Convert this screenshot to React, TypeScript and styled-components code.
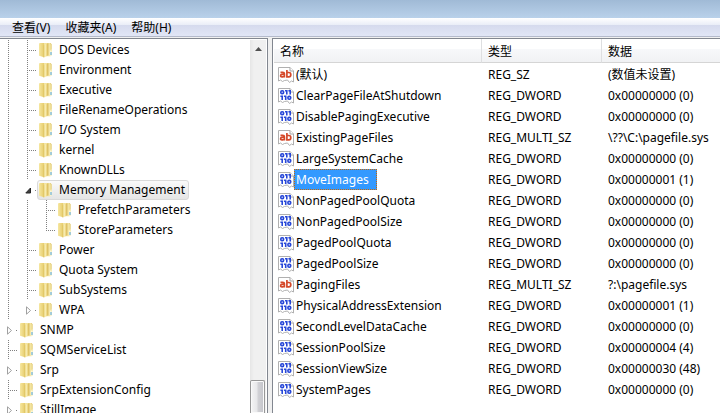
import React from "react";
import styled, { createGlobalStyle, css } from "styled-components";

const GlobalStyle = createGlobalStyle`
  * { box-sizing: border-box; }
  body { margin: 0; overflow: hidden; }
  body, button, table {
    font-family: "Noto Sans", "Noto Sans CJK SC", sans-serif;
    font-size: 12px;
    line-height: 20px;
    color: #000;
  }
`;

const Window = styled.div`
  display: flex;
  flex-direction: column;
  height: 100vh;
  background: #f0f0f0;
`;

const TitleBar = styled.header`
  flex: none;
  height: 18px;
  background: linear-gradient(#a0bad6, #b9d1ea);
`;

const MenuBar = styled.nav`
  flex: none;
  display: flex;
  gap: 15px;
  height: 20px;
  padding: 0 12px;
  background: linear-gradient(#fff 0, #e9edf7 7px, #d5daed 7px, #e1e6f6 18px, #b4bacb 18px, #b4bacb 19px, #f0f0f0 19px);
`;

const MenuButton = styled.button`
  padding: 0;
  border: 0;
  background: none;
  height: 20px;
  white-space: nowrap;
`;

const Panes = styled.main`
  flex: 1;
  min-height: 0;
  display: flex;
  gap: 4px;
`;

const TreePane = styled.section`
  flex: 0 0 268px;
  display: flex;
  min-height: 0;
  padding: 1px 1px 0 0;
  border-top: 1px solid #828790;
  border-right: 1px solid #828790;
  background: #fff;
`;

const Tree = styled.ul`
  flex: 1;
  min-width: 0;
  margin: 0;
  padding: 0;
  list-style: none;
  overflow: hidden;
`;

const TreeRow = styled.li`
  display: flex;
  height: 20px;
`;

const dotsDown = "repeating-linear-gradient(#808080 0, #808080 1px, transparent 1px, transparent 2px)";
const dotsAcross = "repeating-linear-gradient(90deg, #808080 0, #808080 1px, transparent 1px, transparent 2px)";

const Guide = styled.span`
  flex: 0 0 19px;
  background: ${dotsDown} 8px 0 / 1px 100% no-repeat;
`;

type BranchKind = "tee" | "end" | "toggle";

const Branch = styled.span<{ $kind: BranchKind }>`
  flex: 0 0 18px;
  display: flex;
  align-items: center;
  padding-left: 6px;
  ${(p) =>
    p.$kind === "toggle"
      ? css`background: ${dotsAcross} 16px 10px / 2px 1px no-repeat;`
      : css`background:
          ${dotsAcross} 10px 10px / 8px 1px no-repeat,
          ${dotsDown} 8px 0 / 1px ${p.$kind === "tee" ? "100%" : "11px"} no-repeat;`}
`;

const Toggle = styled.button`
  display: flex;
  padding: 0;
  border: 0;
  background: none;
`;

const TreeItem = styled.button<{ $selected: boolean }>`
  display: flex;
  align-items: center;
  gap: 6px;
  height: 20px;
  padding: 0 3px 0 1px;
  border: 1px solid ${(p) => (p.$selected ? "#d9d9d9" : "transparent")};
  border-radius: 3px;
  background: ${(p) => (p.$selected ? "linear-gradient(#fafafa, #e5e5e5)" : "none")};
  line-height: 18px;
  white-space: nowrap;
`;

const ScrollBar = styled.div`
  flex: 0 0 16px;
  display: flex;
  flex-direction: column;
  justify-content: space-between;
  align-items: stretch;
  background: linear-gradient(90deg, #e6e6e6, #f0f0f0 4px, #f0f0f0);
`;

const ScrollArrow = styled.button`
  display: flex;
  justify-content: center;
  align-items: center;
  height: 17px;
  padding: 0;
  border: 0;
  background: none;
`;

const ScrollThumb = styled.div`
  height: 33px;
  margin-right: 1px;
  border: 1px solid #979797;
  border-bottom: 0;
  border-radius: 2px 2px 0 0;
  background: linear-gradient(90deg, #f5f5f5, #e8e8ea 45%, #d2d2d6 55%, #c2c3c9);
  box-shadow: inset 0 0 0 1px #fafafa;
`;

const ListPane = styled.section`
  flex: 1;
  min-width: 0;
  overflow: hidden;
  padding: 0 0 0 1px;
  border-top: 1px solid #828790;
  border-left: 1px solid #828790;
  background: #fff;
`;

const ValueTable = styled.table`
  width: 100%;
  table-layout: fixed;
  border-collapse: separate;
  border-spacing: 0;
`;

const HeadCell = styled.th<{ $width?: number }>`
  width: ${(p) => (p.$width ? `${p.$width}px` : "auto")};
  height: 24px;
  padding: 2px 0 0 6px;
  border-right: ${(p) => (p.$width ? "1px solid #dedfe1" : "0")};
  border-bottom: 1px solid #d5d5d5;
  background: linear-gradient(#fff 0, #fff 10px, #f7f8fa 10px, #f1f2f4 100%);
  font-weight: 400;
  text-align: left;
`;

const ValueCell = styled.td`
  height: 21px;
  padding: 0 0 0 6px;
  line-height: 21px;
  white-space: nowrap;
  overflow: hidden;
`;

const NameCell = styled(ValueCell)`
  padding-left: 4px;
`;

const TableBody = styled.tbody`
  &::before {
    content: "";
    display: table-row;
    height: 1px;
  }
`;

const NameLine = styled.div`
  display: flex;
  align-items: center;
  height: 21px;
`;

const ValueName = styled.button<{ $selected: boolean }>`
  height: 21px;
  padding: 0 7px 0 1px;
  border: 1px dotted ${(p) => (p.$selected ? "#cc6600" : "transparent")};
  background: ${(p) => (p.$selected ? "#3399ff" : "none")};
  color: ${(p) => (p.$selected ? "#fff" : "#000")};
  line-height: 19px;
`;

const FolderIcon = () => (
  <svg width="14" height="16" viewBox="0 0 14 16" aria-hidden="true">
    <defs>
      <linearGradient id="side" x1="0" x2="1">
        <stop offset="0" stopColor="#f6e7a0" />
        <stop offset="1" stopColor="#e6cc6c" />
      </linearGradient>
      <linearGradient id="cover" x1="0" x2="1">
        <stop offset="0" stopColor="#dcbf58" />
        <stop offset="0.35" stopColor="#fbf2bd" />
        <stop offset="1" stopColor="#e2c45c" />
      </linearGradient>
    </defs>
    <path d="M4 1h7.500l1 1v5.500l.5.800V13l-1.500 1.200H4z" fill="#f3e4a0" />
    <path d="M11 1.300l1.200.800v5.400" fill="none" stroke="#e0c670" strokeWidth=".7" />
    <path d="M0 1.500 1 1h4v14.200L0 13.800z" fill="url(#side)" />
    <path d="M4.600 3.300 8.800 1.300V13.400L4.600 15.700z" fill="url(#cover)" />
    <path d="M9 1.300V13.400" stroke="#cda94a" strokeWidth=".6" />
    <path d="M10.800 8.500h2v4.700l-2 .8z" fill="#fdf7d8" />
    <path d="M12 10v3" stroke="#4aa3e0" />
  </svg>
);

const Sheet = () => (
  <>
    <path d="M.5.5h11.500l3.500 3.500v11l-2-1-2 1.500-2-2.500-3 .500-2 1-2-1.500-2 1z" fill="#fff" stroke="#b0b0b0" />
    <path d="M12 .5V4h3.500" fill="#fff" stroke="#a5a5a5" />
  </>
);

const TextValueIcon = () => (
  <svg width="16" height="16" viewBox="0 0 16 16" aria-hidden="true">
    <Sheet />
    <g fill="none" stroke="#d5492a" strokeWidth="1.700">
      <path d="M2.500 5.300h2.200q1.700 0 1.700 1.400v3.800M6.400 7.400H4Q2.600 7.400 2.600 8.700T4 9.900h.8q1.600-.2 1.600-1.500" />
      <path d="M8.900 3v6.900h2q1.900 0 1.900-2.200t-1.900-2.200h-2" />
    </g>
  </svg>
);

const BinaryValueIcon = () => (
  <svg width="16" height="16" viewBox="0 0 16 16" aria-hidden="true">
    <Sheet />
    <g fill="none" stroke="#2747d8" strokeWidth="1.600">
      <rect x="2.800" y="2.800" width="2.800" height="2.800" rx="1.200" />
      <path d="M7 2.800h1.800V6.400M10.400 2.800h1.800V6.400" />
      <path d="M2.400 8.300h1.800V12M5.900 8.300h1.800V12" />
      <rect x="9.900" y="8.400" width="2.800" height="2.800" rx="1.200" />
    </g>
  </svg>
);

type Node = { name: string; depth: number; kind: BranchKind; open?: boolean; selected?: boolean };

const nodes: Node[] = [
  { name: "DOS Devices", depth: 1, kind: "tee" },
  { name: "Environment", depth: 1, kind: "tee" },
  { name: "Executive", depth: 1, kind: "tee" },
  { name: "FileRenameOperations", depth: 1, kind: "tee" },
  { name: "I/O System", depth: 1, kind: "tee" },
  { name: "kernel", depth: 1, kind: "tee" },
  { name: "KnownDLLs", depth: 1, kind: "tee" },
  { name: "Memory Management", depth: 1, kind: "toggle", open: true, selected: true },
  { name: "PrefetchParameters", depth: 2, kind: "tee" },
  { name: "StoreParameters", depth: 2, kind: "end" },
  { name: "Power", depth: 1, kind: "tee" },
  { name: "Quota System", depth: 1, kind: "tee" },
  { name: "SubSystems", depth: 1, kind: "tee" },
  { name: "WPA", depth: 1, kind: "toggle" },
  { name: "SNMP", depth: 0, kind: "toggle" },
  { name: "SQMServiceList", depth: 0, kind: "tee" },
  { name: "Srp", depth: 0, kind: "toggle" },
  { name: "SrpExtensionConfig", depth: 0, kind: "tee" },
  { name: "StillImage", depth: 0, kind: "toggle" },
];

const values: [string, string, string][] = [
  ["(默认)", "REG_SZ", "(数值未设置)"],
  ["ClearPageFileAtShutdown", "REG_DWORD", "0x00000000 (0)"],
  ["DisablePagingExecutive", "REG_DWORD", "0x00000000 (0)"],
  ["ExistingPageFiles", "REG_MULTI_SZ", "\\??\\C:\\pagefile.sys"],
  ["LargeSystemCache", "REG_DWORD", "0x00000000 (0)"],
  ["MoveImages", "REG_DWORD", "0x00000001 (1)"],
  ["NonPagedPoolQuota", "REG_DWORD", "0x00000000 (0)"],
  ["NonPagedPoolSize", "REG_DWORD", "0x00000000 (0)"],
  ["PagedPoolQuota", "REG_DWORD", "0x00000000 (0)"],
  ["PagedPoolSize", "REG_DWORD", "0x00000000 (0)"],
  ["PagingFiles", "REG_MULTI_SZ", "?:\\pagefile.sys"],
  ["PhysicalAddressExtension", "REG_DWORD", "0x00000001 (1)"],
  ["SecondLevelDataCache", "REG_DWORD", "0x00000000 (0)"],
  ["SessionPoolSize", "REG_DWORD", "0x00000004 (4)"],
  ["SessionViewSize", "REG_DWORD", "0x00000030 (48)"],
  ["SystemPages", "REG_DWORD", "0x00000000 (0)"],
];

export default function App() {
  return (
    <Window>
      <GlobalStyle />
      <TitleBar />
      <MenuBar>
        <MenuButton>查看(V)</MenuButton>
        <MenuButton>收藏夹(A)</MenuButton>
        <MenuButton>帮助(H)</MenuButton>
      </MenuBar>
      <Panes>
        <TreePane>
          <Tree>
            {nodes.map((node) => (
              <TreeRow key={node.name}>
                {Array.from({ length: node.depth }, (_, i) => (
                  <Guide key={i} />
                ))}
                <Branch $kind={node.kind}>
                  {node.kind === "toggle" && (
                    <Toggle aria-label={`${node.open ? "折叠" : "展开"} ${node.name}`}>
                      <svg width="7" height="9" viewBox="0 0 7 9">
                        {node.open ? (
                          <path d="M5.500 2V7H.8z" fill="#404040" stroke="#262626" />
                        ) : (
                          <path d="M1.500 .8v7.400L5.500 4.500z" fill="#fff" stroke="#a0a0a0" />
                        )}
                      </svg>
                    </Toggle>
                  )}
                </Branch>
                <TreeItem $selected={!!node.selected}>
                  <FolderIcon />
                  {node.name}
                </TreeItem>
              </TreeRow>
            ))}
          </Tree>
          <ScrollBar>
            <ScrollArrow aria-label="向上滚动">
              <svg width="7" height="4" viewBox="0 0 7 4">
                <path d="M0 4 3.500 0 7 4z" fill="#505050" />
              </svg>
            </ScrollArrow>
            <ScrollThumb />
          </ScrollBar>
        </TreePane>
        <ListPane>
          <ValueTable>
            <thead>
              <tr>
                <HeadCell $width={208}>名称</HeadCell>
                <HeadCell $width={120}>类型</HeadCell>
                <HeadCell>数据</HeadCell>
              </tr>
            </thead>
            <TableBody>
              {values.map(([name, type, data]) => (
                <tr key={name}>
                  <NameCell>
                    <NameLine>
                      {type === "REG_DWORD" ? <BinaryValueIcon /> : <TextValueIcon />}
                      <ValueName $selected={name === "MoveImages"}>{name}</ValueName>
                    </NameLine>
                  </NameCell>
                  <ValueCell>{type}</ValueCell>
                  <ValueCell>{data}</ValueCell>
                </tr>
              ))}
            </TableBody>
          </ValueTable>
        </ListPane>
      </Panes>
    </Window>
  );
}
